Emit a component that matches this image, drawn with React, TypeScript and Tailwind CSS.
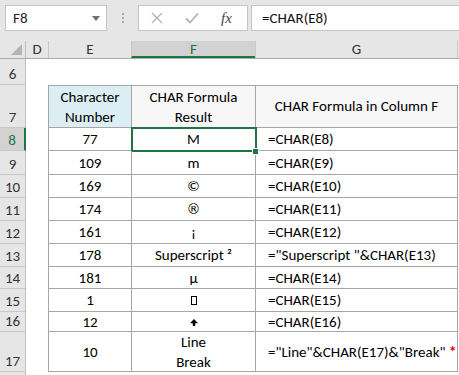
import React from "react";

const CELL_FONT = { fontFamily: "Carlito, Lato, 'Liberation Sans', sans-serif" };

function Tofu() {
  return (
    <svg width="6" height="9" viewBox="0 0 6 9">
      <rect x="0.5" y="0.5" width="5" height="8" fill="none" stroke="#000" strokeWidth="1" />
    </svg>
  );
}

function UpArrow() {
  return (
    <svg width="8" height="7" viewBox="0 0 8 7" className="mt-[1px]">
      <path d="M4 0 L8 4.2 L5.2 4.2 L5.2 7 L2.8 7 L2.8 4.2 L0 4.2 Z" fill="#000" />
    </svg>
  );
}

type Row = { n: number; h: string; e: string; f: React.ReactNode; g: React.ReactNode };

const rows: Row[] = [
  { n: 8, h: "h-[23px]", e: "77", f: "M", g: "=CHAR(E8)" },
  { n: 9, h: "h-[24px]", e: "109", f: "m", g: "=CHAR(E9)" },
  { n: 10, h: "h-[23px]", e: "169", f: "©", g: "=CHAR(E10)" },
  {
    n: 11,
    h: "h-[23px]",
    e: "174",
    f: (
      <span className="text-[14px]" style={{ fontFamily: "'DejaVu Sans', sans-serif" }}>
        ®
      </span>
    ),
    g: "=CHAR(E11)",
  },
  { n: 12, h: "h-[23px]", e: "161", f: "¡", g: "=CHAR(E12)" },
  { n: 13, h: "h-[23px]", e: "178", f: "Superscript ²", g: '="Superscript "&CHAR(E13)' },
  { n: 14, h: "h-[22px]", e: "181", f: "µ", g: "=CHAR(E14)" },
  { n: 15, h: "h-[23px]", e: "1", f: <Tofu />, g: "=CHAR(E15)" },
  { n: 16, h: "h-[20px]", e: "12", f: <UpArrow />, g: "=CHAR(E16)" },
  {
    n: 17,
    h: "h-[40px]",
    e: "10",
    f: (
      <span className="flex flex-col items-center leading-[20px]">
        <span>Line</span>
        <span>Break</span>
      </span>
    ),
    g: (
      <span>
        ="Line"&amp;CHAR(E17)&amp;"Break" <span className="text-[#ff0000] font-bold">*</span>
      </span>
    ),
  },
];

function RowHeader({ n, selected }: { n: number; selected?: boolean }) {
  return (
    <div
      className={
        "w-[26px] shrink-0 flex items-end justify-center pb-[1px] border-b border-[#c8c8c8] text-[15px] leading-[18px] " +
        (selected
          ? "bg-[#d2d2d2] text-[#217346] border-r-2 border-r-[#217346]"
          : "bg-[#e6e6e6] text-[#333] border-r border-r-[#bdbdbd]")
      }
      style={CELL_FONT}
    >
      {n}
    </div>
  );
}

export default function App() {
  return (
    <div className="w-[459px] h-[375px] overflow-hidden bg-white text-black" style={CELL_FONT}>
      {/* Formula bar */}
      <div className="h-[41px] bg-[#e6e6e6] flex items-start pt-[5px]">
        <div className="ml-[5px] w-[102px] h-[26px] bg-white border border-[#c6c6c6] flex items-center justify-between pl-[7px] pr-[6px]">
          <span className="text-[15px] text-[#222]">F8</span>
          <svg width="8" height="5" viewBox="0 0 8 5">
            <path d="M0 0 L8 0 L4 5 Z" fill="#707070" />
          </svg>
        </div>
        <div className="w-[31px] h-[26px] flex flex-col items-center justify-center gap-[2px]">
          <div className="w-[2px] h-[2px] bg-[#a8a8a8]" />
          <div className="w-[2px] h-[2px] bg-[#a8a8a8]" />
          <div className="w-[2px] h-[2px] bg-[#a8a8a8]" />
        </div>
        <div className="w-[110px] h-[26px] bg-white border border-[#c6c6c6] flex items-center pl-[11px]">
          <svg width="12" height="12" viewBox="0 0 12 12" className="ml-[1px]">
            <path d="M1 1 L11 11 M11 1 L1 11" stroke="#b4b4b4" strokeWidth="1.4" />
          </svg>
          <svg width="14" height="12" viewBox="0 0 14 12" className="ml-[22px]">
            <path d="M1 6.5 L5 10.5 L13 1.5" stroke="#b4b4b4" strokeWidth="1.8" fill="none" />
          </svg>
          <span
            className="ml-[22px] text-[15px] italic text-[#444]"
            style={{ fontFamily: "'Liberation Serif', serif" }}
          >
            fx
          </span>
        </div>
        <div className="ml-[3px] flex-1 h-[26px] bg-white border border-[#c6c6c6] border-r-0 flex items-center pl-[10px]">
          <span className="text-[15px] text-[#111]">=CHAR(E8)</span>
        </div>
      </div>

      {/* Column headers */}
      <div className="h-[18px] flex bg-[#e6e6e6] border-b border-[#ababab] text-[15px] leading-[17px] text-[#333]">
        <div className="w-[26px] shrink-0 border-r border-[#bdbdbd] relative">
          <svg width="11" height="11" viewBox="0 0 11 11" className="absolute right-[3px] bottom-[3px]">
            <path d="M11 0 L11 11 L0 11 Z" fill="#b4b4b4" />
          </svg>
        </div>
        <div className="w-[22px] shrink-0 flex justify-center">D</div>
        <div className="w-[83px] shrink-0 border-l border-[#c8c8c8] flex justify-center">E</div>
        <div className="w-[124px] shrink-0 border-l border-[#c8c8c8] bg-[#d2d2d2] text-[#217346] border-b-2 border-b-[#217346] flex justify-center">
          F
        </div>
        <div className="w-[203px] shrink-0 border-l border-r border-[#c8c8c8] flex justify-center">G</div>
        <div className="flex-1" />
      </div>

      {/* Row 6 */}
      <div className="h-[26px] flex">
        <RowHeader n={6} />
        <div className="flex-1" />
      </div>

      {/* Row 7 (table header) */}
      <div className="h-[43px] flex text-[15px]">
        <RowHeader n={7} />
        <div className="w-[22px] shrink-0" />
        <div className="w-[83px] shrink-0 border-l border-t border-b border-[#a6a6a6] bg-[#daeef3] flex flex-col items-center justify-center leading-[20px]">
          <span>Character</span>
          <span>Number</span>
        </div>
        <div className="w-[124px] shrink-0 border-l border-t border-b border-[#a6a6a6] bg-[#f7f7f7] flex flex-col items-center justify-center leading-[20px]">
          <span>CHAR Formula</span>
          <span>Result</span>
        </div>
        <div className="w-[203px] shrink-0 border-l border-t border-b border-r border-[#a6a6a6] bg-[#f7f7f7] flex items-center justify-center">
          CHAR Formula in Column F
        </div>
        <div className="flex-1" />
      </div>

      {rows.map((r) => (
        <div key={r.n} className={r.h + " flex text-[15px] leading-[18px]"}>
          <RowHeader n={r.n} selected={r.n === 8} />
          <div className="w-[22px] shrink-0" />
          <div className="w-[83px] shrink-0 border-l border-b border-[#a6a6a6] flex items-center justify-center">
            {r.e}
          </div>
          <div className="w-[124px] shrink-0 border-l border-b border-[#a6a6a6] flex items-center justify-center relative">
            {r.f}
            {r.n === 8 && (
              <>
                <div className="absolute left-[-1px] top-[-1px] w-[126px] h-[25px] border-2 border-[#217346]" />
                <div className="absolute left-[121px] top-[21px] w-[5px] h-[5px] bg-[#217346] outline outline-1 outline-white" />
              </>
            )}
          </div>
          <div className="w-[203px] shrink-0 border-l border-b border-r border-[#a6a6a6] flex items-center pl-[12px] whitespace-nowrap">
            {r.g}
          </div>
          <div className="flex-1" />
        </div>
      ))}

      {/* Row 18 partial */}
      <div className="h-[10px] flex">
        <div className="w-[26px] shrink-0 bg-[#e6e6e6] border-r border-[#bdbdbd]" />
        <div className="flex-1" />
      </div>
    </div>
  );
}
